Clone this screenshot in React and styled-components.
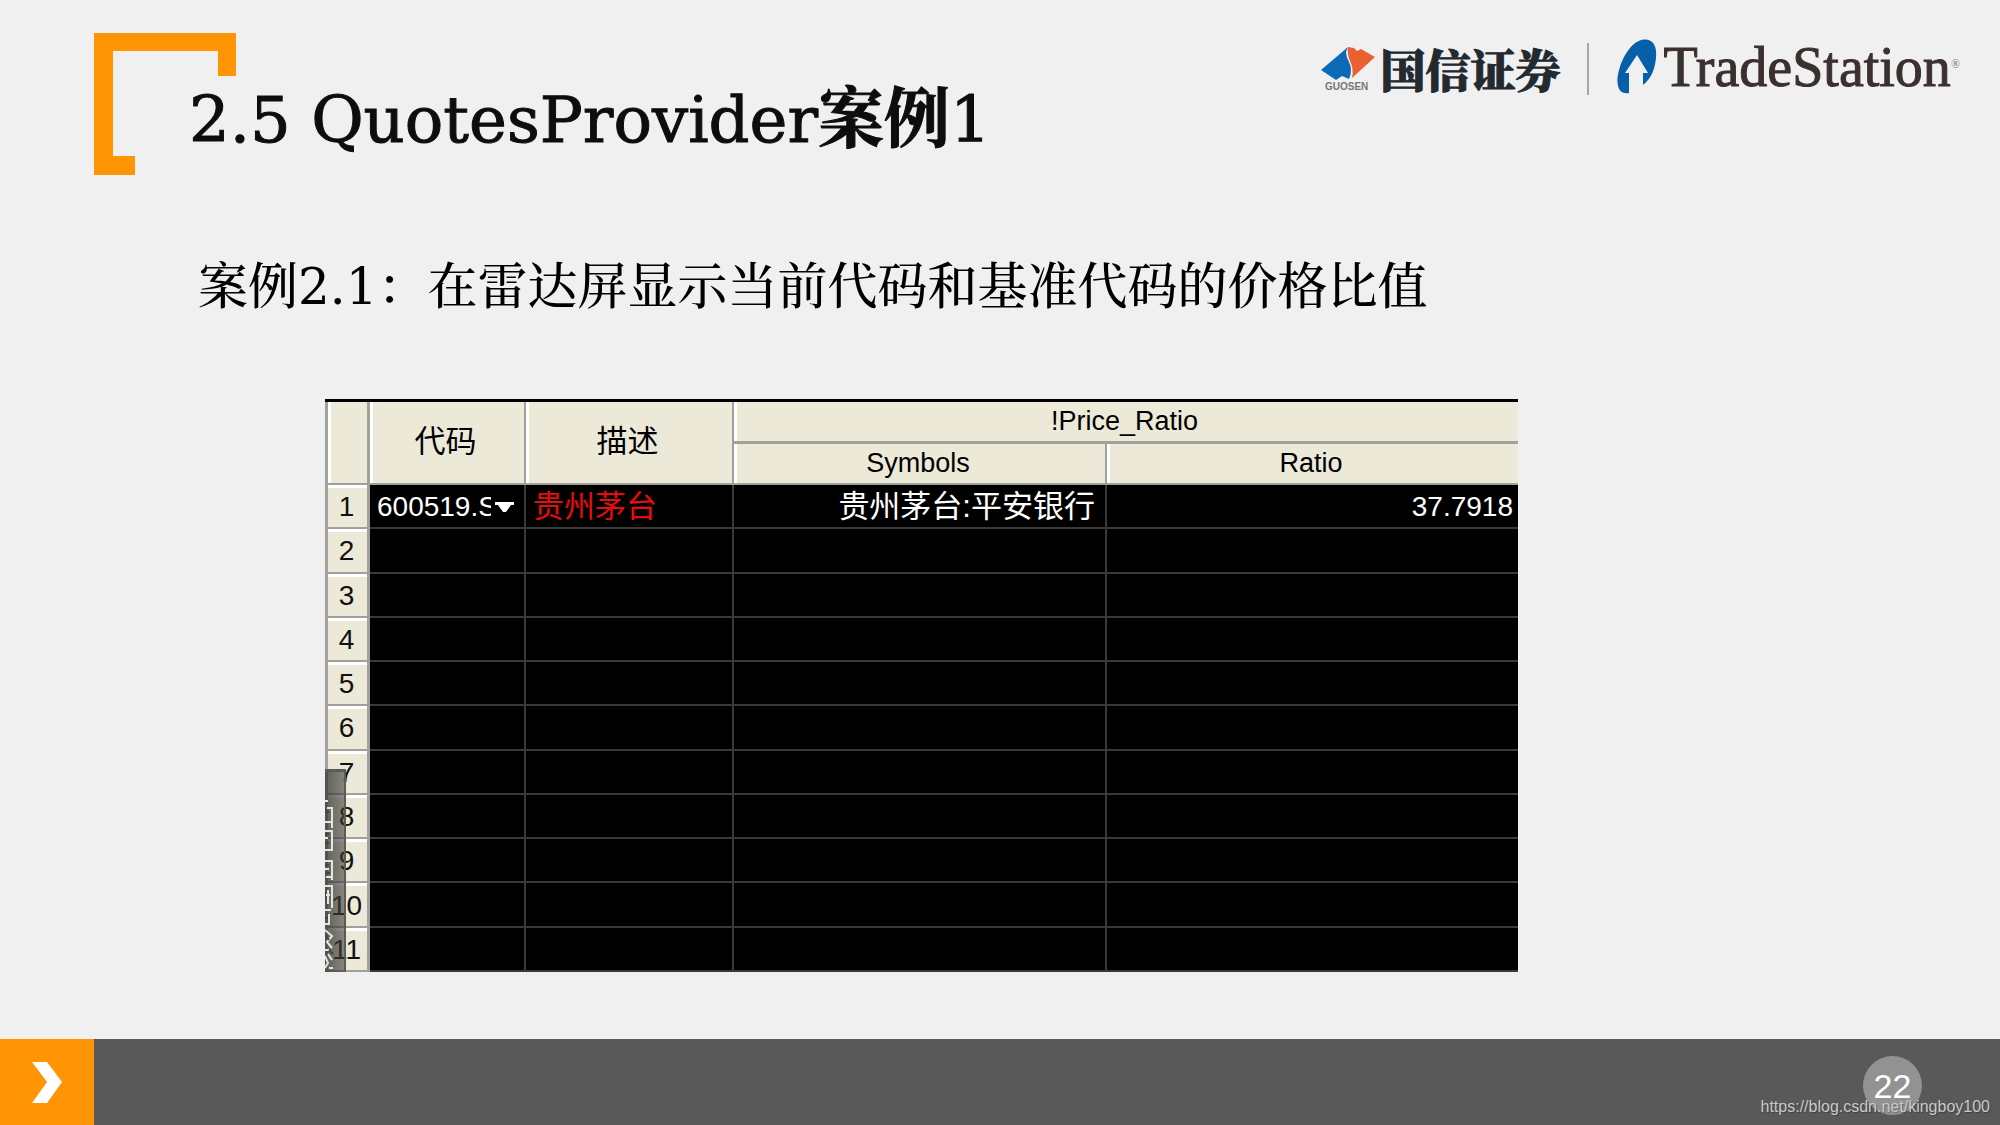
import React from 'react';
import styled, { createGlobalStyle } from 'styled-components';

const rows = [
  { id: 1, code: '600519.S', name: '贵州茅台', symbols: '贵州茅台:平安银行', ratio: '37.7918' },
  ...[2, 3, 4, 5, 6, 7, 8, 9, 10, 11].map((id) => ({ id })),
];

const GuosenMark = () => (
  <svg width='54' height='44' viewBox='0 0 54 44' aria-hidden='true'>
    <path d='M27 0 L25 5 Q25 10 28 15 Q32 23 28 32 L21 29 L15 33 L0 23 Z' fill='#0a6ab8' />
    <path d='M27 0 L33 1 L36 4 L40 2 L54 10 L31 31 Q33 22 29 14 Q26 7 27 0 Z' fill='#ea6030' />
    <text x='4' y='43' fontFamily='Liberation Sans, sans-serif' fontSize='10' fontWeight='700' fill='#777'>
      GUOSEN
    </text>
  </svg>
);

const TradeStationMark = () => (
  <Leaf width='40' height='56' viewBox='0 0 40 56' aria-hidden='true'>
    <path
      d='M12 54 C5 55 1 52 0.5 43 C0 29 11 2 27 0.5 C37 0 40 8 39 19 C38 30 34 40 26 46 L26 34 L31 34 L20 16 L8 34 L12 34 Z'
      fill='#0560a9'
    />
  </Leaf>
);

const TabMarks = () => (
  <svg width='9' height='174' viewBox='0 0 9 174' aria-hidden='true'>
    <path
      d='M0 3 H3 M2 10 H7 V30 M0 24 H6 M0 33 H7 V53 M0 40 H3 M0 52 H6 M0 63 H7 V82 M0 71 H4 M1 79 H6 M0 88 H7 V110 M3 92 V106 M0 97 H5 M0 112 H6 M4 116 V126 H0 M0 132 L7 138 L2 144 L7 150 M0 152 H4 M3 156 L7 162 M0 158 L3 165 L0 170 M4 170 H8'
      fill='none'
      stroke='#e4e4e2'
      strokeWidth='2'
    />
    <path d='M0 14 H4 M0 36 H4 M0 45 H4 M0 67 H4 M1 75 H5 M0 93 V102 M0 120 H3 M0 137 L4 142 M4 152 L8 156' fill='none' stroke='#444' strokeWidth='2' />
  </svg>
);

const App = () => {
  return (
    <>
      <GlobalStyle />
      <Slide>
        <Header>
          <Bracket width='142' height='142' viewBox='0 0 142 142' aria-hidden='true'>
            <path d='M0 0 H142 V43 H124 V18 H19 V123 H41 V142 H0 Z' fill='#ff9404' />
          </Bracket>
          <Title>
            2.5 QuotesProvider<b>案例</b>1
          </Title>
          <Logos>
            <GuosenMark />
            <GuosenName>国信证券</GuosenName>
            <Divider />
            <TradeStationMark />
            <TradeStationName>
              TradeStation<sup>®</sup>
            </TradeStationName>
          </Logos>
        </Header>
        <Main>
          <Subtitle>案例2.1：在雷达屏显示当前代码和基准代码的价格比值</Subtitle>
          <Radar>
            <Grid>
              <colgroup>
                <Col $width='45px' />
                <Col $width='156px' />
                <Col $width='208px' />
                <Col $width='373px' />
                <col />
              </colgroup>
              <thead>
                <tr>
                  <HeadCell rowSpan={2} aria-label='#' />
                  <HeadCell rowSpan={2} $large>代码</HeadCell>
                  <HeadCell rowSpan={2} $large>描述</HeadCell>
                  <HeadCell colSpan={2} $group>!Price_Ratio</HeadCell>
                </tr>
                <tr>
                  <HeadCell>Symbols</HeadCell>
                  <HeadCell>Ratio</HeadCell>
                </tr>
              </thead>
              <tbody>
                {rows.map(({ id, code, name, symbols, ratio }) => (
                  <tr key={id}>
                    <RowNumber scope='row'>{id}</RowNumber>
                    <Cell>
                      {code && (
                        <CodeButton type='button'>
                          <span>{code}</span>
                          <svg width='19' height='10' viewBox='0 0 19 10' aria-hidden='true'>
                            <path d='M0 0 H19 V3 H16 L11 10 H8 L3 3 H0 Z' fill='#fff' />
                          </svg>
                        </CodeButton>
                      )}
                    </Cell>
                    <Cell $red>{name}</Cell>
                    <Cell $right>{symbols}</Cell>
                    <Cell $right $flush>{ratio}</Cell>
                  </tr>
                ))}
              </tbody>
            </Grid>
            <SideTab>
              <TabMarks />
            </SideTab>
          </Radar>
        </Main>
        <Footer>
          <Next type='button' aria-label='next'>
            <svg width='30' height='41' viewBox='0 0 30 41' aria-hidden='true'>
              <path d='M0 0 H15 L30 20 L15 41 H0 L15 20 Z' fill='#fff' />
            </svg>
          </Next>
          <PageNumber>22</PageNumber>
          <Watermark href='https://blog.csdn.net/kingboy100'>https://blog.csdn.net/kingboy100</Watermark>
        </Footer>
      </Slide>
    </>
  );
};

const GlobalStyle = createGlobalStyle`
  * {
    box-sizing: border-box;
  }
  body {
    margin: 0;
    background: #f0f0f0;
  }
`;

const Slide = styled.div`
  min-height: 100vh;
  display: flex;
  flex-direction: column;
  font-family: 'DejaVu Serif', 'Noto Serif CJK SC', 'Noto Sans CJK SC', serif;
`;

const Header = styled.header`
  display: flex;
  align-items: flex-start;
  padding: 33px 40px 0 94px;
`;

const Bracket = styled.svg`
  flex: none;
`;

const Title = styled.h1`
  margin: 41px 0 0 -47px;
  font-size: 64px;
  line-height: 90px;
  font-weight: 400;
  color: #0d0d0d;
  white-space: nowrap;
  -webkit-text-stroke: 1px #0d0d0d;
  b {
    font-size: 66px;
  }
`;

const Logos = styled.div`
  display: flex;
  align-items: center;
  margin-left: auto;
  height: 72px;
`;

const GuosenName = styled.span`
  margin-left: 6px;
  font-family: 'Noto Serif CJK SC', 'Noto Sans CJK SC', serif;
  font-size: 45px;
  line-height: 56px;
  font-weight: 900;
  color: #222a30;
  -webkit-text-stroke: 1px #222a30;
`;

const Divider = styled.span`
  width: 2px;
  height: 52px;
  margin: 0 28px 0 26px;
  background: #a6a6a6;
`;

const Leaf = styled.svg`
  margin-bottom: 4px;
`;

const TradeStationName = styled.span`
  margin: 0 0 4px 7px;
  font-family: 'Liberation Serif', serif;
  font-size: 56px;
  line-height: 56px;
  color: #3a302e;
  -webkit-text-stroke: 1px #3a302e;
  sup {
    font-size: 12px;
    line-height: 12px;
    vertical-align: 18px;
    color: #777;
    -webkit-text-stroke: 0;
  }
`;

const Main = styled.main`
  flex: 1;
  padding: 77px 482px 0 198px;
`;

const Subtitle = styled.h2`
  margin: 0;
  font-size: 50px;
  line-height: 70px;
  font-weight: 500;
  color: #000;
  white-space: nowrap;
`;

const Radar = styled.section`
  position: relative;
  margin: 77px 0 0 127px;
  border-top: 3px solid #000;
`;

const Grid = styled.table`
  width: 100%;
  height: 570px;
  table-layout: fixed;
  border-collapse: separate;
  border-spacing: 0;
  font-family: 'Liberation Sans', 'Noto Sans CJK SC', sans-serif;
  font-size: 28px;
  line-height: 32px;
`;

const Col = styled.col`
  width: ${({ $width }) => $width};
`;

const HeadCell = styled.th`
  height: ${({ $group }) => ($group ? '42px' : '41px')};
  padding: 0 3px 2px 0;
  background: #ece9d8;
  border-right: 2px solid #a0a09e;
  border-bottom: ${({ $group }) => ($group ? '3px' : '2px')} solid #a0a09e;
  box-shadow: inset 3px 0 #fff;
  font-size: ${({ $large }) => ($large ? '31px' : '27px')};
  font-weight: 400;
  color: #000;
  &:first-child[rowspan] {
    border-left: 3px solid #a0a09e;
    border-right-width: 3px;
  }
  &:last-child {
    border-right: 0;
  }
`;

const RowNumber = styled.th`
  padding: 2px 2px 0 0;
  background: #ece9d8;
  border: solid #a0a09e;
  border-width: 0 3px 2px;
  box-shadow: inset 0 3px #fff;
  font-weight: 400;
  color: #111;
`;

const Cell = styled.td`
  padding: 2px ${({ $flush }) => ($flush ? '5px' : '10px')} 0 7px;
  background: #000;
  border-right: ${({ $flush }) => ($flush ? '0' : '2px')} solid #3a3a3a;
  border-bottom: 2px solid #3a3a3a;
  font-size: ${({ $flush }) => ($flush ? '28px' : '31px')};
  text-align: ${({ $right }) => ($right ? 'right' : 'left')};
  color: ${({ $red }) => ($red ? '#e80c0c' : '#fff')};
  white-space: nowrap;
`;

const CodeButton = styled.button`
  display: flex;
  align-items: center;
  gap: 4px;
  width: 100%;
  padding: 0;
  border: 0;
  background: none;
  font-family: inherit;
  font-size: 28px;
  line-height: 32px;
  color: #fff;
  span {
    width: 115px;
    overflow: hidden;
    text-align: left;
  }
  svg {
    flex: none;
  }
`;

// translucent tab that hangs over the lower left edge of the grid
const SideTab = styled.div`
  position: absolute;
  left: 0;
  bottom: 0;
  display: flex;
  align-items: flex-end;
  width: 21px;
  height: 203px;
  border-top: 3px solid #5c5c57;
  border-right: 2px solid #5c5c57;
  background: linear-gradient(90deg, rgba(60, 60, 58, 0.8), rgba(60, 60, 56, 0.58));
`;

const Footer = styled.footer`
  position: relative;
  display: flex;
  align-items: center;
  justify-content: space-between;
  height: 86px;
  padding-right: 78px;
  background: #595959;
`;

const Next = styled.button`
  display: flex;
  align-items: center;
  justify-content: center;
  width: 94px;
  height: 86px;
  padding: 0;
  border: 0;
  background: #ff9404;
`;

const PageNumber = styled.span`
  width: 59px;
  height: 59px;
  margin-top: 6px;
  border-radius: 50%;
  background: #929292;
  font-family: 'Liberation Sans', sans-serif;
  font-size: 34px;
  line-height: 60px;
  text-align: center;
  color: #fff;
`;

const Watermark = styled.a`
  position: absolute;
  right: 10px;
  bottom: 8px;
  font-family: 'Liberation Sans', sans-serif;
  font-size: 16px;
  line-height: 20px;
  color: #c9c9c9;
  text-decoration: none;
  text-shadow: 1px 1px 1px rgba(0, 0, 0, 0.3);
`;

export default App;
